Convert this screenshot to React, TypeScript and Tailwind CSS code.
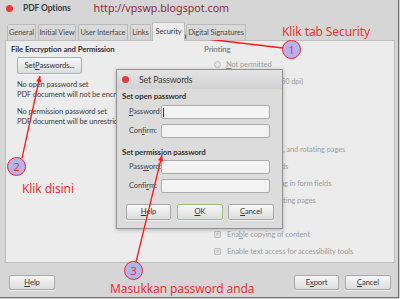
import React from "react";

function U({ children }: { children: React.ReactNode }) {
  return <span className="underline underline-offset-[1px] decoration-[0.6px]">{children}</span>;
}

function Btn({
  children,
  w,
  green,
  className = "",
}: {
  children: React.ReactNode;
  w: string;
  green?: boolean;
  className?: string;
}) {
  return (
    <div
      className={`${w} ${className} flex items-center justify-center rounded-[2px] border ${
        green ? "border-[#9dbf7c]" : "border-[#a9a9a9]"
      } bg-linear-to-b from-[#f8f8f8] to-[#dddddd] text-[7.6px] text-[#333] shadow-[0_1px_0_rgba(255,255,255,0.6)]`}
    >
      {children}
    </div>
  );
}

function Tab({ label, w, active }: { label: string; w: string; active?: boolean }) {
  if (active) {
    return (
      <div
        className={`${w} h-[19px] -mb-px relative z-10 flex items-center justify-center rounded-t-[2px] border border-b-0 border-[#bdbdbd] bg-[#ececec] text-[7.5px] text-[#3a3a3a]`}
      >
        {label}
      </div>
    );
  }
  return (
    <div
      className={`${w} h-[16px] flex items-center justify-center rounded-t-[2px] border border-b-0 border-[#b9b9b9] bg-linear-to-b from-[#dcdcdc] to-[#d2d2d2] text-[7.5px] text-[#4a4a4a]`}
    >
      {label}
    </div>
  );
}

function Radio({ children }: { children: React.ReactNode }) {
  return (
    <div className="h-[17px] flex items-center pl-[10px]">
      <div className="w-[7px] h-[7px] rounded-full border border-[#bcbcbc] bg-[#e6e6e6]" />
      <span className="ml-[5px]">{children}</span>
    </div>
  );
}

function Check({ children }: { children: React.ReactNode }) {
  return (
    <div className="h-[17px] flex items-center pl-[10px]">
      <div className="w-[7px] h-[7px] rounded-[1px] border border-[#c0c0c0] bg-[#e2e2e2] flex items-center justify-center text-[5px] leading-none text-[#9a9a9a]">
        ×
      </div>
      <span className="ml-[6px]">{children}</span>
    </div>
  );
}

function Field({ label, caret, mt }: { label: React.ReactNode; caret?: boolean; mt: string }) {
  return (
    <div className={`${mt} flex items-center h-[14px]`}>
      <span className="w-[39px] pl-[7px] text-[7.5px] text-[#444] whitespace-nowrap">{label}</span>
      <div className="w-[109px] h-[14px] rounded-[2px] border border-[#ababab] bg-[#f3f3f3] flex items-center pl-[1px]">
        {caret && <div className="w-[1px] h-[9px] bg-[#333]" />}
      </div>
    </div>
  );
}

function arrowHead(x1: number, y1: number, x2: number, y2: number) {
  const a = Math.atan2(y2 - y1, x2 - x1);
  const len = 6;
  const wdt = 2.6;
  const bx = x2 - len * Math.cos(a);
  const by = y2 - len * Math.sin(a);
  const px = -Math.sin(a) * wdt;
  const py = Math.cos(a) * wdt;
  return `${x2},${y2} ${bx + px},${by + py} ${bx - px},${by - py}`;
}

const lines: [number, number, number, number][] = [
  [283, 48, 181, 36],
  [22, 158, 40, 76],
  [136, 262, 162, 155],
];

function Circle({ n, left, top }: { n: string; left: string; top: string }) {
  return (
    <div
      className={`absolute ${left} ${top} w-[19px] h-[19px] rounded-full border-[1.5px] border-[#ff1e1e] bg-[#b2b4ee] flex items-center justify-center text-[11px] leading-none text-[#e83030] font-['Noto_Sans',sans-serif]`}
    >
      {n}
    </div>
  );
}

export default function App() {
  return (
    <div className="w-[400px] h-[299px] relative overflow-hidden bg-[#d6d6d6] font-['Lato',sans-serif] tracking-[-0.1px]">
      <div className="w-[399px] h-[298px] border-r border-b border-[#6e6e6e] flex flex-col">
        {/* title bar */}
        <div className="h-[17px] flex items-center pl-[6px]">
          <div className="w-[7px] h-[7px] rounded-full bg-[#e63a3e]" />
          <span className="ml-[10px] text-[8.5px] font-bold text-[#3c3c3c]">PDF Options</span>
          <span className="ml-[23px] text-[10.7px] tracking-normal text-[#8c2b3b] font-['Noto_Sans',sans-serif]">
            http://vpswp.blogspot.com
          </span>
        </div>

        {/* tabs */}
        <div className="mt-[5px] h-[18px] flex items-end pl-[7px] relative z-10">
          <Tab label="General" w="w-[29px]" />
          <div className="w-[2px]" />
          <Tab label="Initial View" w="w-[38px]" />
          <div className="w-[2px]" />
          <Tab label="User Interface" w="w-[50px]" />
          <div className="w-[2px]" />
          <Tab label="Links" w="w-[21px]" />
          <div className="w-[1px]" />
          <Tab label="Security" w="w-[33px]" active />
          <div className="w-[1px]" />
          <Tab label="Digital Signatures" w="w-[60px]" />
        </div>

        {/* panel */}
        <div className="ml-[5px] w-[390px] h-[223px] border border-[#bdbdbd] bg-[#ececec] flex text-[7.5px]">
          <div className="w-[198px] pl-[5px] pt-[3px] flex flex-col text-[#3c3c3c]">
            <div className="h-[11px] leading-[11px] text-[7.8px] font-bold text-[#333]">File Encryption and Permission</div>
            <Btn w="w-[65px] h-[17px] mt-[2px] ml-[6px]" green>
              Set <U>P</U>asswords...
            </Btn>
            <div className="ml-[6px] mt-[6px] whitespace-nowrap leading-[10px]">
              <div>No open password set</div>
              <div>PDF document will not be encrypted</div>
              <div className="mt-[7px]">No permission password set</div>
              <div>PDF document will be unrestricted</div>
            </div>
          </div>
          <div className="flex-1 pt-[2px] flex flex-col text-[#9c9c9c]">
            <div className="h-[13px] flex items-center text-[7.8px] font-bold text-[#858585]">Printing</div>
            <Radio>
              <U>N</U>ot permitted
            </Radio>
            <Radio>Low resolution (150 dpi)</Radio>
            <Radio>High resolution</Radio>
            <div className="h-[17px] flex items-center text-[7.8px] font-bold text-[#858585]">Changes</div>
            <Radio>Not permitted</Radio>
            <Radio>Inserting, deleting, and rotating pages</Radio>
            <Radio>Filling in form fields</Radio>
            <Radio>Commenting, filling in form fields</Radio>
            <Radio>Any except extracting pages</Radio>
            <div className="h-[17px] flex items-center text-[7.8px] font-bold text-[#858585]">Contents</div>
            <Check>
              Ena<U>b</U>le copying of content
            </Check>
            <Check>Enable text access for accessibility tools</Check>
          </div>
        </div>

        {/* bottom buttons */}
        <div className="mt-[12px] flex pl-[9px] pr-[7px]">
          <Btn w="w-[46px] h-[15px]">
            <U>H</U>elp
          </Btn>
          <div className="flex-1" />
          <Btn w="w-[45px] h-[15px]">
            E<U>x</U>port
          </Btn>
          <Btn w="w-[46px] h-[15px]" className="ml-[6px]">
            <U>C</U>ancel
          </Btn>
        </div>
      </div>

      {/* Set Passwords dialog */}
      <div className="absolute left-[116px] top-[69px] w-[167px] h-[160px] border border-[#929292] bg-[#dcdcdc] shadow-[0_1px_4px_rgba(0,0,0,0.25)] flex flex-col">
        <div className="h-[19px] flex items-center pl-[5px] bg-linear-to-b from-[#e4e4e4] to-[#d2d2d2]">
          <div className="w-[7px] h-[7px] rounded-full bg-[#e63a3e]" />
          <span className="ml-[10px] text-[8.7px] text-[#3a3a3a]">Set Passwords</span>
        </div>
        <div className="pl-[5px] pt-[2px] flex flex-col">
          <div className="h-[10px] leading-[10px] text-[7.8px] font-bold text-[#333]">Set open password</div>
          <Field
            mt="mt-[4px]"
            caret
            label={
              <>
                <U>P</U>assword:
              </>
            }
          />
          <Field
            mt="mt-[5px]"
            label={
              <>
                Con<U>f</U>irm:
              </>
            }
          />
          <div className="mt-[9px] h-[10px] leading-[10px] text-[7.8px] font-bold text-[#333]">
            Set permission password
          </div>
          <Field
            mt="mt-[3px]"
            label={
              <>
                Pass<U>w</U>ord:
              </>
            }
          />
          <Field
            mt="mt-[5px]"
            label={
              <>
                Confi<U>r</U>m:
              </>
            }
          />
          <div className="mt-[11px] flex pl-[4px]">
            <Btn w="w-[45px] h-[16px]">
              <U>H</U>elp
            </Btn>
            <Btn w="w-[46px] h-[16px]" className="ml-[6px]" green>
              <U>O</U>K
            </Btn>
            <Btn w="w-[46px] h-[16px]" className="ml-[5px]">
              <U>C</U>ancel
            </Btn>
          </div>
        </div>
      </div>

      {/* annotations */}
      <svg className="absolute inset-0 pointer-events-none" width="400" height="299" viewBox="0 0 400 299">
        {lines.map(([x1, y1, x2, y2], i) => (
          <g key={i}>
            <line x1={x1} y1={y1} x2={x2} y2={y2} stroke="#ff1a1a" strokeWidth="1.3" />
            <polygon points={arrowHead(x1, y1, x2, y2)} fill="#ff1a1a" />
          </g>
        ))}
      </svg>
      <Circle n="1" left="left-[282px]" top="top-[40px]" />
      <Circle n="2" left="left-[7px]" top="top-[157px]" />
      <Circle n="3" left="left-[124px]" top="top-[261px]" />
      <span className="absolute left-[282px] top-[24px] text-[12px] leading-[16px] text-[#f03232] font-['Noto_Sans',sans-serif] whitespace-nowrap">
        Klik tab Security
      </span>
      <span className="absolute left-[22px] top-[181px] text-[12px] leading-[16px] text-[#f03232] font-['Noto_Sans',sans-serif] whitespace-nowrap">
        Klik disini
      </span>
      <span className="absolute left-[110px] top-[281px] text-[12px] leading-[16px] text-[#f03232] font-['Noto_Sans',sans-serif] whitespace-nowrap">
        Masukkan password anda
      </span>
    </div>
  );
}
